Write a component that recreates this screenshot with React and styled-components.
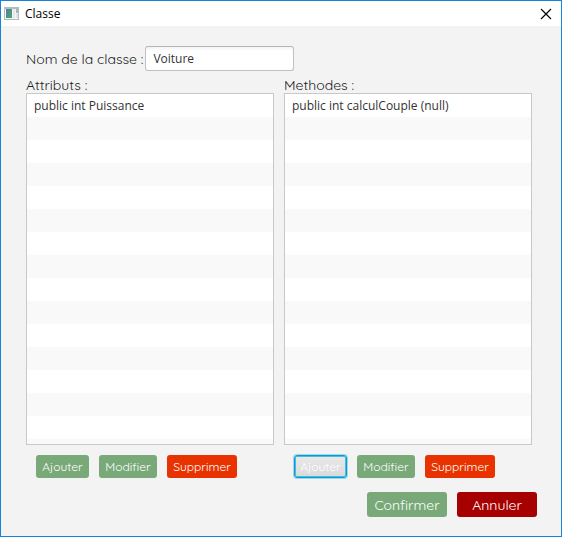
import React, { useState } from "react";
import styled, { createGlobalStyle, css } from "styled-components";

const GlobalStyle = createGlobalStyle`
  *, *::before, *::after { box-sizing: border-box; }
  body { margin: 0; }
`;

const uiFont = `"Open Sans", "Noto Sans", sans-serif`;
const roundFont = `Quicksand, Lato, sans-serif`;

const Window = styled.div`
  display: flex;
  flex-direction: column;
  min-height: 100vh;
  border: 1px solid #1883d7;
  background: #f3f3f3;
  color: #333;
  font-family: ${uiFont};
  font-size: 12px;
`;

const TitleBar = styled.header`
  display: flex;
  align-items: center;
  gap: 6px;
  height: 25px;
  padding: 0 8px 0 3px;
  background: #fff;
`;

const Title = styled.h1`
  flex: 1;
  margin: 0;
  color: #000;
  font-size: 12px;
  font-weight: 400;
  line-height: 24px;
`;

const CloseButton = styled.button`
  display: flex;
  padding: 0;
  border: 0;
  background: none;
`;

const Content = styled.form`
  display: flex;
  flex: 1;
  flex-direction: column;
  padding: 20px 24px 19px 25px;
`;

const NameRow = styled.div`
  display: flex;
  align-items: center;
  gap: 2px;
  margin-bottom: 6px;
`;

const Label = styled.label`
  color: #222;
  font-family: ${roundFont};
  font-size: 14px;
  line-height: 16px;
`;

const PanelTitle = styled.h2`
  margin: 0;
  color: #222;
  font-family: ${roundFont};
  font-size: 14px;
  font-weight: 400;
  line-height: 16px;
`;

const TextField = styled.input`
  width: 149px;
  height: 25px;
  padding: 0 7px;
  border: 1px solid #c0c0c0;
  border-top-color: #b5b5b5;
  border-radius: 3px;
  outline: 0;
  background: linear-gradient(#f3f3f3, #fff 4px);
  color: #333;
  font-family: ${uiFont};
  font-size: 12px;
`;

const Panels = styled.div`
  display: grid;
  flex: 1;
  grid-template-columns: 1fr 1fr;
  gap: 10px;
  padding-right: 5px;
`;

const Panel = styled.section`
  display: flex;
  flex-direction: column;
  min-width: 0;
`;

const List = styled.ul`
  flex: 1;
  min-height: 48px;
  margin: 0;
  padding: 0;
  border: 1px solid #c8c8c8;
  background: repeating-linear-gradient(#fff 0 23px, #f9f9f9 23px 46px);
  list-style: none;
`;

const Item = styled.li`
  padding: 0 7px;
  line-height: 23px;
`;

const Actions = styled.div`
  display: flex;
  gap: 10px;
  padding: 10px 10px 0;
`;

const Footer = styled.footer`
  display: flex;
  justify-content: flex-end;
  gap: 10px;
  margin-top: 14px;
`;

const tones = { green: "#79a978", red: "#e83300", dark: "#a70000" };

const Button = styled.button`
  height: 23px;
  padding: 0;
  border: 0;
  border-radius: 3px;
  background: ${(p) => tones[p.$tone]};
  color: #fff;
  font-family: ${roundFont};
  font-size: 12px;
  line-height: 16px;
  ${(p) =>
    p.$active &&
    css`
      border: 1px solid #039ed3;
      background: linear-gradient(#e9e9e9, #dadada);
      box-shadow: 0 0 0 1px #9fd8ec, inset 0 0 0 1px #4fb9de;
      color: #fff;
    `}
`;

const SmallButton = styled(Button)`
  width: ${(p) => p.$width}px;
`;

const LargeButton = styled(Button)`
  width: 80px;
  height: 25px;
  font-size: 14px;
`;

function AppIcon() {
  return (
    <svg width="15" height="13" viewBox="0 0 15 13" aria-hidden="true">
      <defs>
        <linearGradient id="pane" x1="0" y1="0" x2="1" y2="1">
          <stop offset="0" stopColor="#4c7fa8" />
          <stop offset="1" stopColor="#4fa765" />
        </linearGradient>
      </defs>
      <rect width="15" height="13" fill="#b4babd" />
      <rect x="1" y="2" width="13" height="10" fill="#f2f4f5" />
      <rect x="2" y="2" width="6" height="9" fill="url(#pane)" />
      <rect x="9" y="2" width="2" height="9" fill="#e4e8ea" />
      <rect x="12" y="2" width="2" height="4" fill="#8fc3b5" />
      <rect x="12" y="7" width="2" height="4" fill="#dde5e8" />
    </svg>
  );
}

function MemberPanel({ title, items, active }) {
  return (
    <Panel>
      <PanelTitle>{title}</PanelTitle>
      <List>
        {items.map((item) => (
          <Item key={item}>{item}</Item>
        ))}
      </List>
      <Actions>
        <SmallButton type="button" $tone="green" $width={53} $active={active}>Ajouter</SmallButton>
        <SmallButton type="button" $tone="green" $width={58}>Modifier</SmallButton>
        <SmallButton type="button" $tone="red" $width={70}>Supprimer</SmallButton>
      </Actions>
    </Panel>
  );
}

export default function App() {
  const [name, setName] = useState("Voiture");
  return (
    <>
      <GlobalStyle />
      <Window>
        <TitleBar>
          <AppIcon />
          <Title>Classe</Title>
          <CloseButton type="button" aria-label="Fermer">
            <svg width="14" height="14" viewBox="0 0 14 14" fill="none" stroke="#000" strokeWidth="1.2" aria-hidden="true">
              <path d="M2 2l10 10M12 2L2 12" />
            </svg>
          </CloseButton>
        </TitleBar>
        <Content onSubmit={(e) => e.preventDefault()}>
          <NameRow>
            <Label htmlFor="class-name">Nom de la classe :</Label>
            <TextField id="class-name" value={name} onChange={(e) => setName(e.target.value)} />
          </NameRow>
          <Panels>
            <MemberPanel title="Attributs :" items={["public int Puissance"]} />
            <MemberPanel title="Methodes :" items={["public int calculCouple (null)"]} active />
          </Panels>
          <Footer>
            <LargeButton type="submit" $tone="green">Confirmer</LargeButton>
            <LargeButton type="button" $tone="dark">Annuler</LargeButton>
          </Footer>
        </Content>
      </Window>
    </>
  );
}
